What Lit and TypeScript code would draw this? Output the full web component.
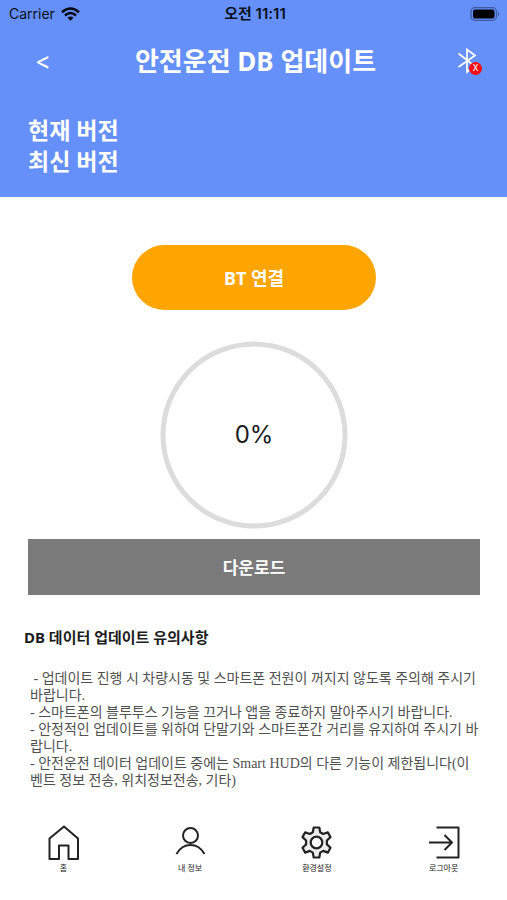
import { LitElement, html, css, svg } from "lit";
import { customElement, property, state } from "lit/decorators.js";

const homeIcon = svg`<path d="M3.500 14.500 18 2.500 32 14.500V35H22.500V21.500H13V35H3.500Z"/>`;
const userIcon = svg`<circle cx="17.500" cy="11.500" r="7.500"/><path d="M3.500 30Q8.500 21 17.500 21T31.500 30"/>`;
const gearIcon = svg`<path d="M14.700 3.500h5.600l.9 4.800 3 1.700 4.600-1.700 2.700 4.800-3.600 3.400v3.900l3.600 3.400-2.700 4.800-4.600-1.700-3 1.700-.9 4.900h-5.600l-.9-4.900-3-1.700-4.600 1.700-2.700-4.800 3.600-3.400v-3.900l-3.600-3.400 2.700-4.800 4.600 1.700 3-1.700Z" fill="#ececec" stroke-width="2.200"/><circle cx="17.500" cy="18.500" r="5.800" fill="#fff" stroke-width="2.200"/>`;
const logoutIcon = svg`<path d="M10.500 3.500H32.500V33.500H10.500M3 18.500H25.500M18.500 11 26 18.500 18.500 26"/>`;

@customElement("status-bar")
export class StatusBar extends LitElement {
  static styles = css`
    :host {
      display: grid;
      grid-template-columns: 1fr auto 1fr;
      align-items: center;
      height: 27px;
      padding: 0 6px 0 9px;
      font: 14px/20px Inter, "Noto Sans CJK KR", sans-serif;
      color: #0b1020;
    }
    .carrier { display: flex; align-items: center; gap: 6px; }
    .time { font-size: 15px; font-weight: 600; }
    .battery { justify-self: end; }
    svg { display: block; }
  `;
  render() {
    return html`
      <span class="carrier">Carrier
        <svg width="19" height="14" viewBox="0 0 19 14" fill="none" stroke="#05070f" stroke-width="2.600" aria-hidden="true">
          <path d="M1 5.200Q9.500-2.200 18 5.200M4 8.400Q9.500 3.600 15 8.400"/>
          <path d="M6.500 10.700Q9.500 8.300 12.500 10.700L9.500 13.700Z" fill="#05070f" stroke="none"/>
        </svg>
      </span>
      <span class="time">오전 11:11</span>
      <svg class="battery" width="31" height="14" viewBox="0 0 31 14" aria-hidden="true">
        <rect x="1" y="0.700" width="25.500" height="12.600" rx="4" fill="none" stroke="#3f59a0" stroke-width="1.300"/>
        <rect x="3" y="2.600" width="21.500" height="8.800" rx="2" fill="#000"/>
        <path d="M28 4.700Q30.500 7 28 9.300Z" fill="#3f59a0"/>
      </svg>
    `;
  }
}

@customElement("progress-ring")
export class ProgressRing extends LitElement {
  @property({ type: Number }) value = 0;
  static styles = css`
    :host { display: grid; place-items: center; width: 188px; height: 188px; }
    svg, .value { grid-area: 1 / 1; }
    .track { stroke: #dcdcdc; }
    .bar { stroke: #ffa500; }
    .value { font: 24px/32px Inter, sans-serif; color: #1c1c1c; }
  `;
  render() {
    return html`
      <svg width="188" height="188" viewBox="0 0 188 188" fill="none" stroke-width="5" aria-hidden="true">
        <circle class="track" cx="94" cy="94" r="91"/>
        ${this.value > 0
          ? svg`<circle class="bar" cx="94" cy="94" r="91" pathLength="100" stroke-dasharray="${this.value} 100" transform="rotate(-90 94 94)"/>`
          : null}
      </svg>
      <span class="value">${this.value}%</span>
    `;
  }
}

@customElement("app-root")
export class AppRoot extends LitElement {
  @state() private progress = 0;

  private notices = [
    "\u00a0- 업데이트 진행 시 차량시동 및 스마트폰 전원이 꺼지지 않도록 주의해 주시기 바랍니다.",
    "- 스마트폰의 블루투스 기능을 끄거나 앱을 종료하지 말아주시기 바랍니다.",
    "- 안정적인 업데이트를 위하여 단말기와 스마트폰간 거리를 유지하여 주시기 바랍니다.",
    "- 안전운전 데이터 업데이트 중에는 Smart HUD의 다른 기능이 제한됩니다(이벤트 정보 전송, 위치정보전송, 기타)",
  ];

  private tabs = [
    { label: "홈", icon: homeIcon },
    { label: "내 정보", icon: userIcon },
    { label: "환경설정", icon: gearIcon },
    { label: "로그아웃", icon: logoutIcon },
  ];

  static styles = css`
    :host {
      display: flex;
      flex-direction: column;
      min-height: 100vh;
      background: #fff;
      font-family: "Noto Sans", "Noto Sans CJK KR", sans-serif;
      color: #1c1c1c;
    }
    * { box-sizing: border-box; }
    button { border: 0; padding: 0; font: inherit; color: inherit; cursor: pointer; }
    .top { background: #6690f9; color: #fff; padding-bottom: 20px; }
    .titlebar {
      display: grid;
      grid-template-columns: 1fr auto 1fr;
      align-items: center;
      height: 68px;
      padding: 0 24px 0 28px;
    }
    .back { justify-self: start; width: 30px; height: 40px; background: none; font: 24px/40px Inter, sans-serif; }
    h1 { margin: 0; font-size: 26px; line-height: 40px; font-weight: 700; }
    .bluetooth { position: relative; justify-self: end; width: 26px; height: 30px; background: none; }
    .bluetooth svg { display: block; }
    .badge {
      position: absolute;
      right: 1px;
      bottom: 1px;
      width: 13px;
      height: 13px;
      border-radius: 50%;
      background: #f60d14;
      font: 9px/13px Roboto, sans-serif;
      text-align: center;
    }
    .versions { margin: 0; padding: 20px 28px 0; font-size: 23px; line-height: 31px; font-weight: 700; }
    .versions p { margin: 0; }
    main { display: flex; flex-direction: column; align-items: center; padding: 48px 27px 0 28px; }
    .connect, .download { padding-bottom: 2px; color: #fff; font-weight: 700; }
    .connect {
      width: 54%;
      height: 65px;
      border-radius: 33px;
      background: #ffa500;
      font-size: 18px;
    }
    progress-ring { margin: 31px 0 10px; }
    .download { width: 100%; height: 56px; background: #7a7a7a; font-size: 17px; }
    .notice { padding: 30px 28px 0 24px; }
    h2 { margin: 0; font-size: 15px; line-height: 24px; font-weight: 700; }
    .lines {
      list-style: none;
      margin: 21px 0 0;
      padding: 0 0 0 6px;
      font: 14px/17px "Liberation Serif", "Noto Sans CJK KR", serif;
      word-break: break-all;
      color: #505050;
    }
    nav { display: grid; grid-template-columns: repeat(4, 1fr); padding: 35px 0 20px; }
    .tab {
      display: flex;
      flex-direction: column;
      align-items: center;
      color: #222;
      text-decoration: none;
      font-size: 8px;
      line-height: 12px;
    }
    .tab svg { display: block; fill: none; stroke: #222; stroke-width: 2; stroke-linejoin: round; }
  `;

  render() {
    return html`
      <header class="top">
        <status-bar></status-bar>
        <div class="titlebar">
          <button class="back" aria-label="뒤로">&lt;</button>
          <h1>안전운전 DB 업데이트</h1>
          <button class="bluetooth" aria-label="블루투스">
            <svg width="20" height="28" viewBox="0 0 20 28" fill="none" stroke="#fff" stroke-width="1.700" aria-hidden="true">
              <path d="M1.500 6.500 17.500 19 10 25V2.500L18 8.500 1.500 20"/>
            </svg>
            <span class="badge">X</span>
          </button>
        </div>
        <div class="versions">
          <p>현재 버전</p>
          <p>최신 버전</p>
        </div>
      </header>
      <main>
        <button class="connect">BT 연결</button>
        <progress-ring .value=${this.progress}></progress-ring>
        <button class="download">다운로드</button>
      </main>
      <section class="notice">
        <h2>DB 데이터 업데이트 유의사항</h2>
        <ul class="lines">${this.notices.map((n) => html`<li>${n}</li>`)}</ul>
      </section>
      <nav>
        ${this.tabs.map(
          (t) => html`<a class="tab" href="#">
            <svg width="35" height="38" viewBox="0 0 35 38" aria-hidden="true">${t.icon}</svg>
            <span>${t.label}</span>
          </a>`
        )}
      </nav>
    `;
  }
}
